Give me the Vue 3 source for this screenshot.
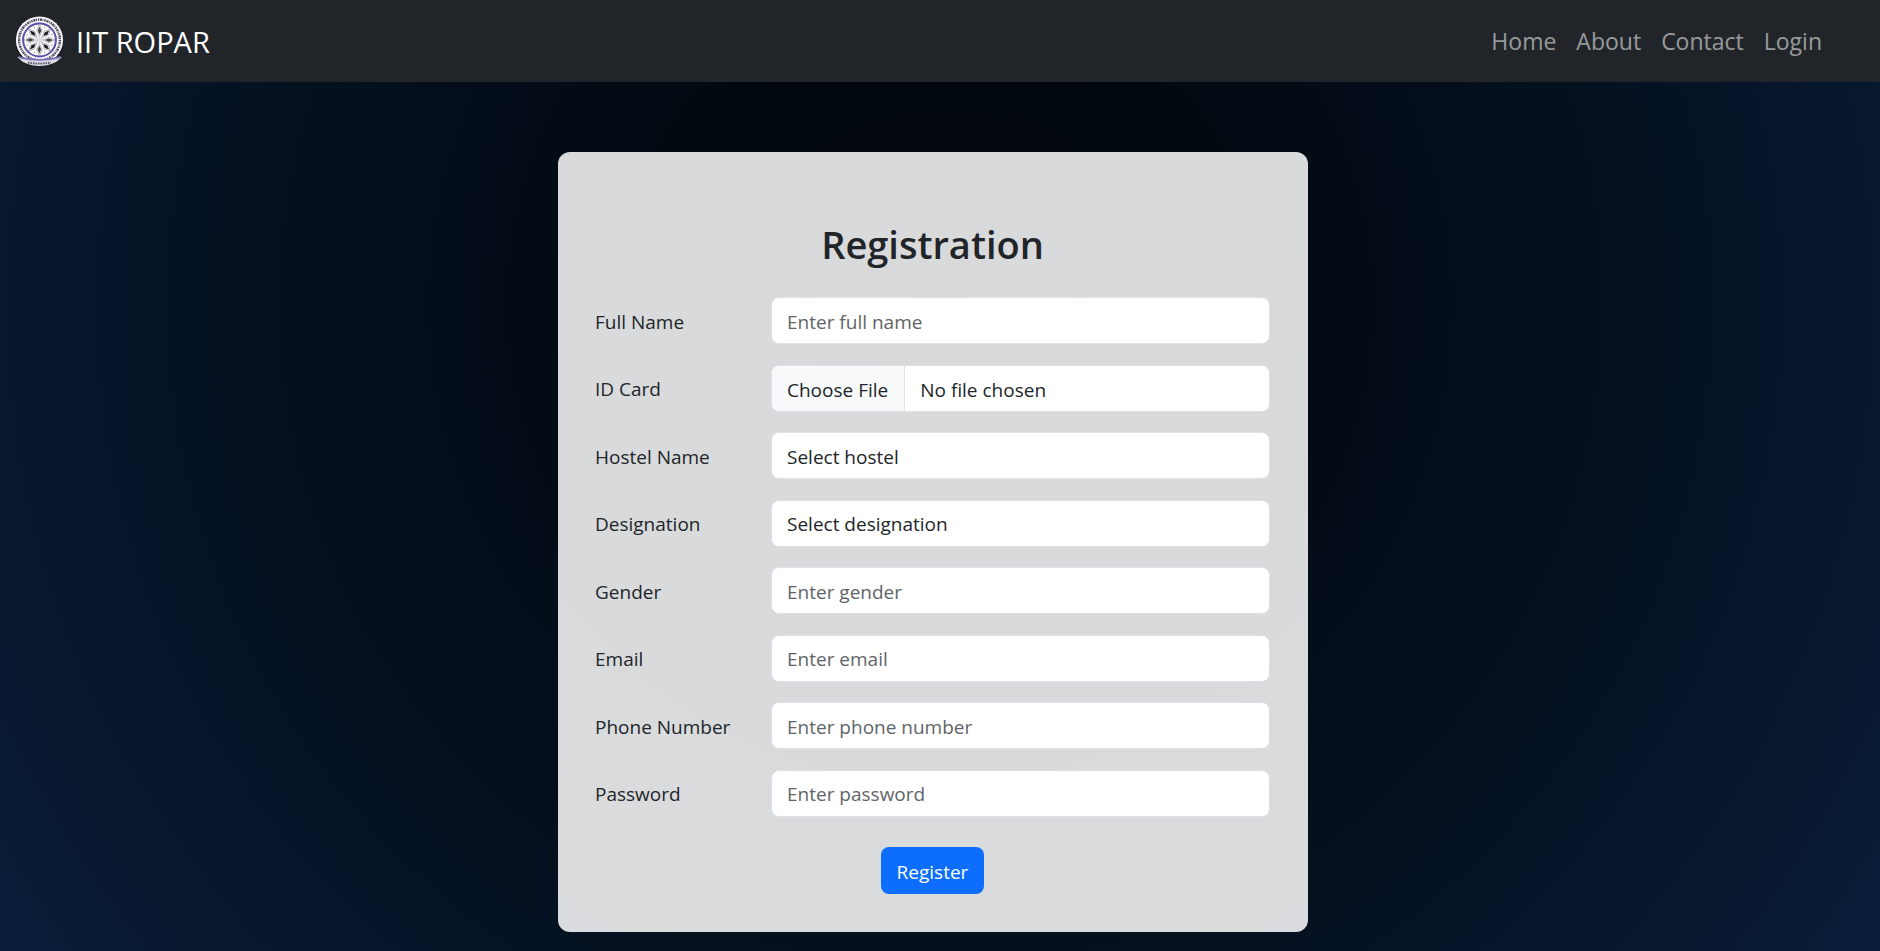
<script setup>
import { ref } from 'vue'

const links = ['Home', 'About', 'Contact', 'Login']
const fields = [
  { id: 'name', label: 'Full Name', type: 'text', hint: 'Enter full name' },
  { id: 'idcard', label: 'ID Card', type: 'file' },
  { id: 'hostel', label: 'Hostel Name', type: 'select', hint: 'Select hostel' },
  { id: 'designation', label: 'Designation', type: 'select', hint: 'Select designation' },
  { id: 'gender', label: 'Gender', type: 'text', hint: 'Enter gender' },
  { id: 'email', label: 'Email', type: 'email', hint: 'Enter email' },
  { id: 'phone', label: 'Phone Number', type: 'tel', hint: 'Enter phone number' },
  { id: 'password', label: 'Password', type: 'password', hint: 'Enter password' },
]
const values = ref({})
const petals = [0, 45, 90, 135, 180, 225, 270, 315]
</script>

<template>
  <div class="page">
    <header class="navbar">
      <a class="brand" href="#">
        <svg class="emblem" viewBox="0 0 50 50" aria-hidden="true">
          <circle cx="25.5" cy="26" r="24" fill="#17171f" />
          <circle cx="25.5" cy="24" r="23.6" fill="#f6f5fb" />
          <circle cx="25.5" cy="24" r="20.4" fill="none" stroke="#4a4858" stroke-width="2.4" stroke-dasharray="1.4 0.8 2 0.7 0.9 0.9" />
          <circle cx="25.5" cy="24" r="16.4" fill="#fff" stroke="#5a50a6" stroke-width="2" />
          <g v-for="a in petals" :key="a" :transform="`rotate(${a} 25.5 24)`">
            <path d="M25.5 20.5 L22.6 14 L25.5 8.8 L28.4 14 Z" fill="#fff" stroke="#85838e" stroke-width="0.6" />
            <path d="M25.5 18.5 L23.8 14.6 L25.5 10.5 L27.4 14.6 Z" :fill="a % 90 ? '#1f1e25' : '#45434d'" />
            <circle cx="30.6" cy="11.6" r="0.7" fill="#8c8a99" />
          </g>
          <circle cx="25.5" cy="24" r="3.6" fill="#dedcea" />
          <path d="M3 41 Q25 47 48 41 L42 46 Q25.5 54 9 46 Z" fill="#dfdee8" />
          <path d="M4 40 Q25.5 46 47 40 L45 42.5 Q25.5 47 6 42.5 Z" fill="#7a72b8" />
          <path d="M14 46.5 Q25.5 48.5 37 46.5" fill="none" stroke="#5d5b66" stroke-width="2" stroke-dasharray="1.6 0.9" />
        </svg>
        <span>IIT ROPAR</span>
      </a>
      <nav class="links">
        <a v-for="link in links" :key="link" href="#">{{ link }}</a>
      </nav>
    </header>

    <main class="content">
      <form class="card" @submit.prevent>
        <h1>Registration</h1>
        <div class="fields">
          <div v-for="f in fields" :key="f.id" class="row">
            <label :for="f.id">{{ f.label }}</label>
            <select v-if="f.type === 'select'" :id="f.id" class="control">
              <option>{{ f.hint }}</option>
            </select>
            <input v-else-if="f.type === 'file'" :id="f.id" class="control file" type="file" />
            <input v-else :id="f.id" v-model="values[f.id]" class="control" :type="f.type" :placeholder="f.hint" />
          </div>
        </div>
        <button class="submit" type="submit">Register</button>
      </form>
    </main>
  </div>
</template>

<style>
body {
  margin: 0;
  background: #040d1c;
}
</style>

<style scoped>
.page {
  display: flex;
  flex-direction: column;
  min-height: 100vh;
  box-sizing: border-box;
  font-family: "Open Sans", "Noto Sans", sans-serif;
  font-size: 19px;
  color: #212529;
  background: radial-gradient(circle at 50% 32%, #02060d 0, #020810 300px, #040e1a 500px, #051120 700px, #051428 830px, #07182f 975px, #091b36 1115px);
}
.navbar {
  display: flex;
  align-items: center;
  justify-content: space-between;
  min-height: 82px;
  padding: 0 58px 0 14px;
  background: #212529;
}
.brand {
  display: flex;
  align-items: center;
  gap: 12px;
  font-size: 29px;
  color: #fff;
  text-decoration: none;
}
.emblem {
  width: 50px;
  height: 50px;
}
.links {
  display: flex;
  gap: 20px;
  font-size: 23px;
}
.links a {
  color: rgba(255, 255, 255, 0.55);
  text-decoration: none;
}
.content {
  display: flex;
  justify-content: center;
  padding: 70px 14px 19px 0;
}
.card {
  display: flex;
  flex-direction: column;
  align-items: center;
  box-sizing: border-box;
  width: 100%;
  max-width: 750px;
  padding: 68px 38px 38px 37px;
  border-radius: 12px;
  background: rgba(255, 255, 255, 0.85);
}
h1 {
  margin: 0 0 29px;
  font-size: 38px;
  line-height: 48px;
  font-weight: 600;
}
.fields {
  display: flex;
  flex-direction: column;
  justify-content: space-between;
  width: 100%;
  min-height: 520px;
}
.row {
  display: grid;
  grid-template-columns: 176px 1fr;
  align-items: center;
}
.row label {
  padding-top: 2px;
}
.control {
  appearance: none;
  box-sizing: border-box;
  width: 100%;
  height: 47px;
  padding: 2px 15px 0;
  border: 1px solid #dee2e6;
  border-radius: 8px;
  background: #fff;
  color: #212529;
  font: inherit;
}
.control::placeholder {
  color: #5f6468;
  opacity: 1;
}
.file {
  padding: 0;
  line-height: 45px;
  overflow: hidden;
}
.file::file-selector-button {
  height: 45px;
  margin: 0 15px 0 0;
  padding: 2px 16px 0 15px;
  border: 0;
  border-right: 1px solid #dee2e6;
  background: #f8f9fa;
  color: #212529;
  font: inherit;
}
.submit {
  height: 47px;
  margin-top: 30px;
  padding: 2px 16px 0;
  border: 0;
  border-radius: 8px;
  background: #0d6efd;
  color: #fff;
  font: inherit;
}
</style>
